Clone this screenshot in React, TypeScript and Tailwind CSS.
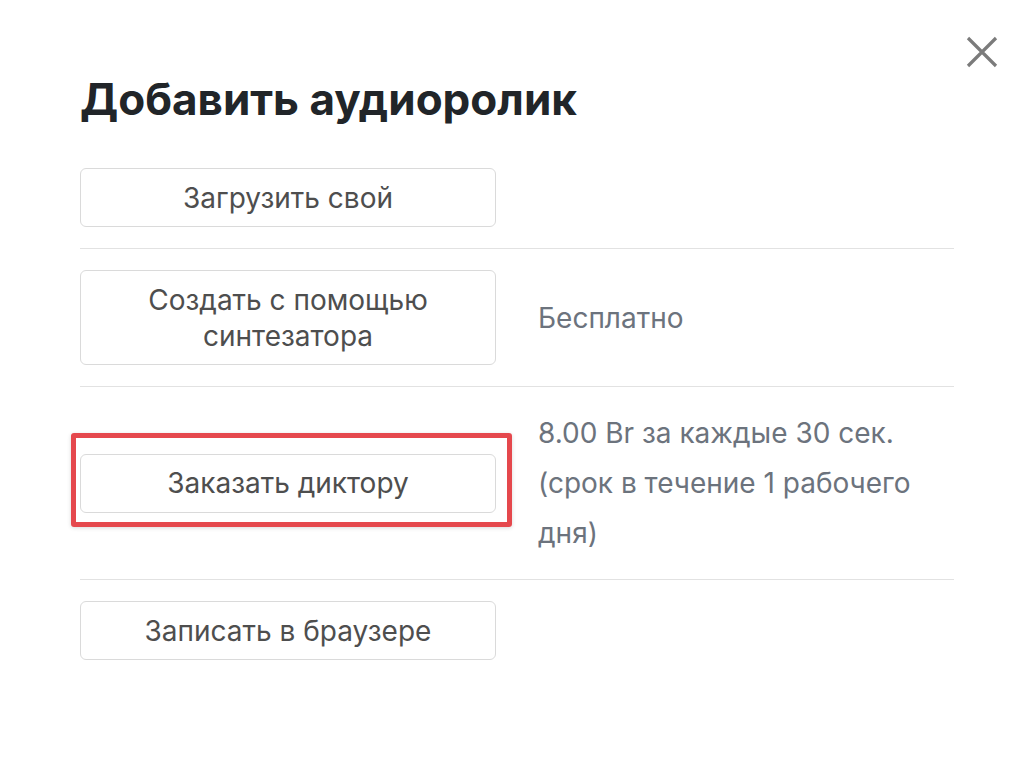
import React from 'react';

const font = { fontFamily: 'Inter, "Noto Sans", sans-serif' };

const OptionButton: React.FC<{ children: React.ReactNode }> = ({ children }) => (
  <button
    type="button"
    className="w-[416px] shrink-0 rounded-[6px] border border-[#dadada] bg-white px-4 py-[10.5px] text-center text-[28px] leading-[36px] text-[#4e4e4e]"
  >
    {children}
  </button>
);

export default function App() {
  return (
    <div className="relative h-[760px] w-[1034px] bg-white" style={font}>
      <button type="button" className="absolute right-[36px] top-[36px] text-[#7b7b7b]" aria-label="Закрыть">
        <svg width="32" height="32" viewBox="0 0 32 32" fill="none" stroke="currentColor" strokeWidth="3.2">
          <path d="M2 2L30 30M30 2L2 30" />
        </svg>
      </button>

      <div className="px-[80px] pt-[75px]">
        <h2 className="text-[44px] font-bold leading-[48px] text-[#212529]">Добавить аудиоролик</h2>

        <div className="mt-[45px]">
          <div className="flex items-center border-b border-[#e2e2e2] pb-[21px]">
            <OptionButton>Загрузить свой</OptionButton>
          </div>

          <div className="flex items-center gap-[42px] border-b border-[#e2e2e2] py-[21px]">
            <OptionButton>
              Создать с помощью
              <br />
              синтезатора
            </OptionButton>
            <span className="text-[28px] leading-[36px] text-[#6c737d]">Бесплатно</span>
          </div>

          <div className="flex items-center gap-[42px] border-b border-[#e2e2e2] py-[21px]">
            <div className="relative">
              <OptionButton>Заказать диктору</OptionButton>
              <div className="pointer-events-none absolute left-[-9px] top-[-21px] h-[94px] w-[441px] rounded-[3px] border-[5px] border-[#e5484d] shadow-[0_1px_4px_rgba(0,0,0,0.15)]" />
            </div>
            <p className="w-[385px] text-[28px] leading-[50px] text-[#6c737d]">
              8.00 Br за каждые 30 сек.
              <br />
              (срок в течение 1 рабочего дня)
            </p>
          </div>

          <div className="flex items-center py-[21px]">
            <OptionButton>Записать в браузере</OptionButton>
          </div>
        </div>
      </div>
    </div>
  );
}
